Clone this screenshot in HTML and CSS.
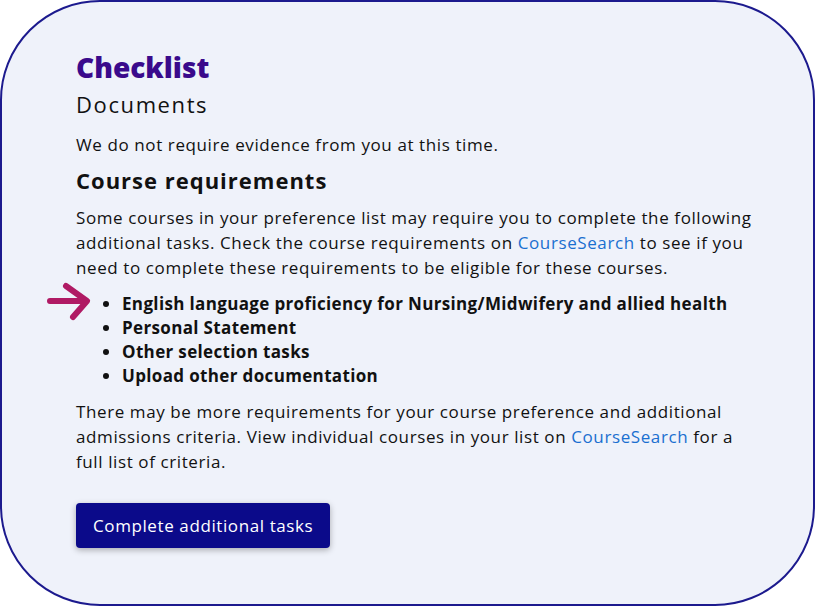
FILE: index.html
```html
<!DOCTYPE html>
<html lang="en">
<head>
    <meta charset="UTF-8">
    <meta name="viewport" content="width=device-width, initial-scale=1.0">
    <title>Checklist</title>
    <link rel="stylesheet" href="styles.css">
</head>
<body>
    <div class="card">
        <h1 class="title">Checklist</h1>
        <h2 class="subtitle">Documents</h2>
        <p>We do not require evidence from you at this time.</p>
        <h3 class="section-title">Course requirements</h3>
        <p>Some courses in your preference list may require you to complete the following additional tasks. Check the course requirements on <a href="#">CourseSearch</a> to see if you need to complete these requirements to be eligible for these courses.</p>
        <ul class="tasks">
            <li class="highlight">
                <svg class="arrow" width="46" height="42" viewBox="0 0 46 42" aria-hidden="true">
                    <path d="M4 21 H40 M20 6 L41 21 L27 37" fill="none" stroke="#b01a64" stroke-width="6" stroke-linecap="round" stroke-linejoin="round"/>
                </svg>
                English language proficiency for Nursing/Midwifery and allied health
            </li>
            <li>Personal Statement</li>
            <li>Other selection tasks</li>
            <li>Upload other documentation</li>
        </ul>
        <p>There may be more requirements for your course preference and additional admissions criteria. View individual courses in your list on <a href="#">CourseSearch</a> for a full list of criteria.</p>
        <button class="btn">Complete additional tasks</button>
    </div>
</body>
</html>
```

FILE: styles.css
```css
body {
    margin: 0;
    padding: 0;
    background: #ffffff;
    font-family: 'Open Sans', sans-serif;
    color: #111111;
}
.card {
    box-sizing: border-box;
    width: 815px;
    height: 606px;
    background: #eff2fa;
    border: 2px solid #1c1a8e;
    border-radius: 100px;
    padding: 45px 53px 0 74px;
}
.title {
    margin: 0;
    font-size: 28px;
    line-height: 40px;
    font-weight: 800;
    color: #3a0a8c;
}
.subtitle {
    margin: 0 0 11px;
    font-size: 22px;
    line-height: 34px;
    font-weight: 400;
    letter-spacing: 1.6px;
}
p {
    margin: 4px 0 0;
    font-size: 17px;
    line-height: 25px;
    letter-spacing: 0.6px;
}
.section-title {
    margin: 7px 0 9px;
    font-size: 22px;
    line-height: 32px;
    font-weight: 700;
    letter-spacing: 1px;
}
a {
    color: #1a6fd0;
    text-decoration: none;
}
.tasks {
    margin: 12px 0 11px;
    padding-left: 46px;
    font-size: 17px;
    line-height: 24px;
    font-weight: 700;
    letter-spacing: 0.35px;
}
.highlight {
    position: relative;
}
.arrow {
    position: absolute;
    left: -76px;
    top: -12px;
}
.btn {
    margin-top: 29px;
    padding: 0 17px;
    height: 45px;
    background: #0b0a8a;
    color: #ffffff;
    border: none;
    border-radius: 4px;
    font-family: inherit;
    font-size: 17px;
    letter-spacing: 0.6px;
    box-shadow: 0 2px 6px rgba(0, 0, 0, 0.3);
}
```
